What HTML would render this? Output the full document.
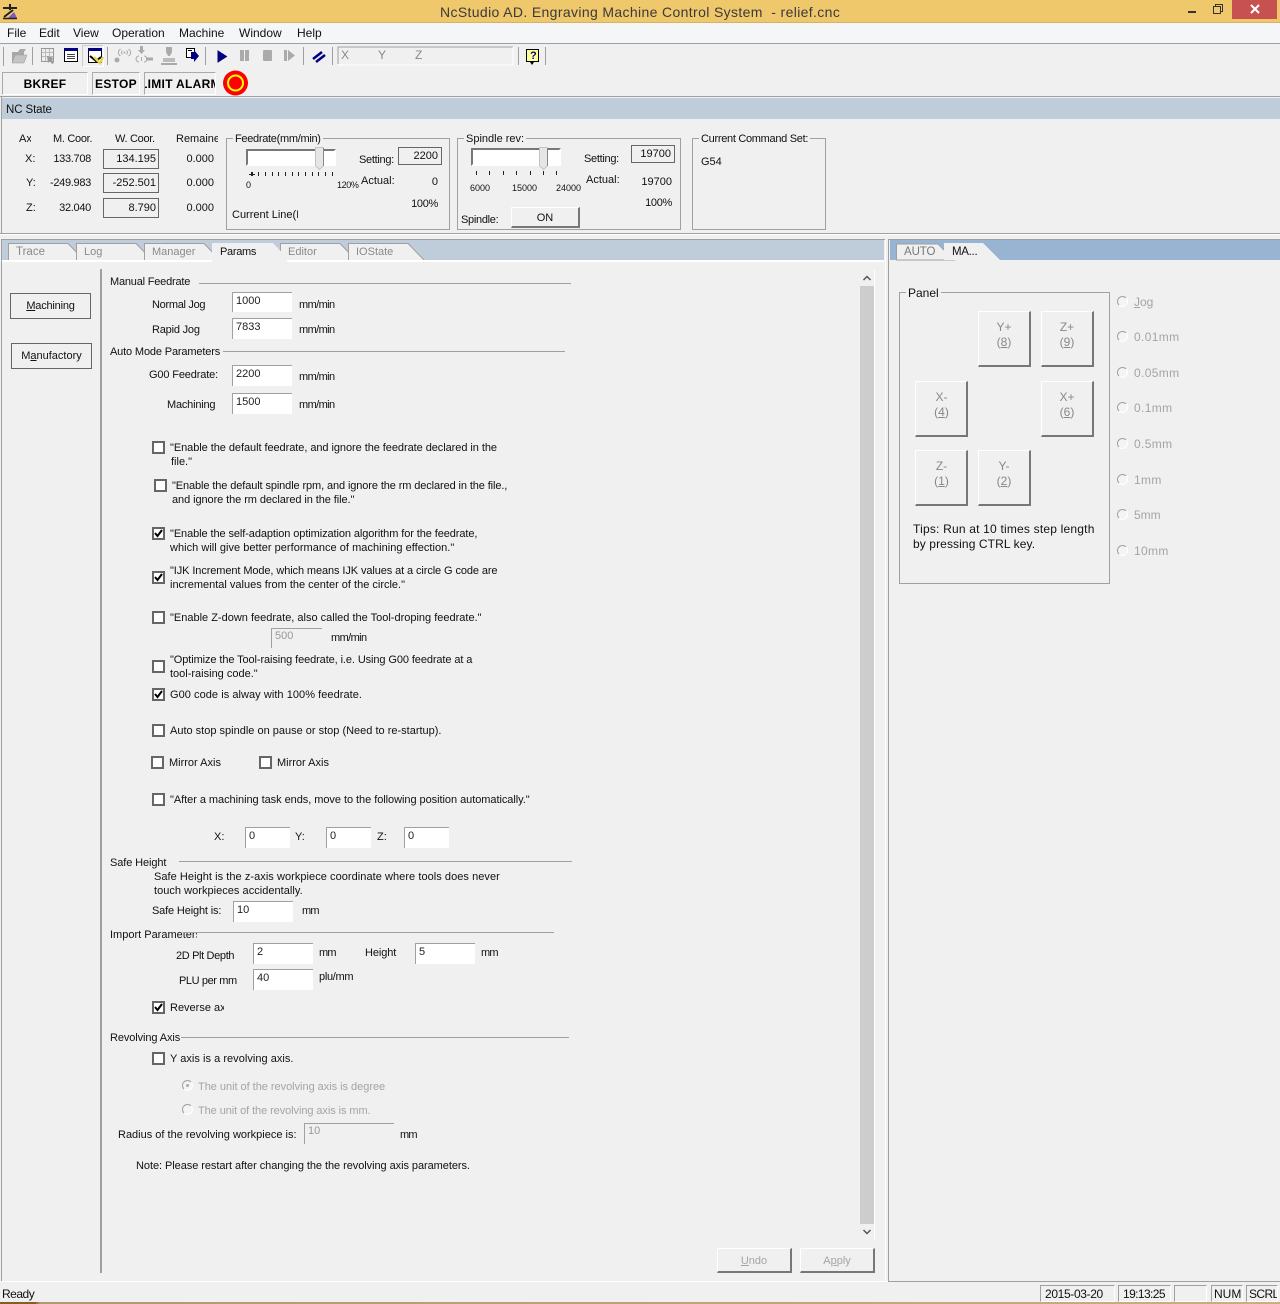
<!DOCTYPE html>
<html><head><meta charset="utf-8"><title>NcStudio</title>
<style>
html,body{margin:0;padding:0;width:1280px;height:1304px;overflow:hidden;background:#f0f0f0}
body{position:relative;font-family:"Liberation Sans",sans-serif;font-size:11px;color:#111}
div,svg{position:absolute;box-sizing:border-box}
.t{white-space:nowrap;line-height:14px;height:14px;transform:translateY(1px)}
.t[style*="font-size"]{transform:none}
.n{letter-spacing:-.3px}
.s{letter-spacing:-.1px}
.m{letter-spacing:-.6px}
.g{color:#a4a4a4}
.r{text-align:right}
.c{text-align:center}
.i{background:#fff;border-top:1px solid #a0a0a0;border-left:1px solid #a0a0a0;padding:1px 0 0 3px;line-height:14px;white-space:nowrap;color:#222}
.b{border:1px solid #666;background:#f0f0f0;text-align:right;padding-right:2px;white-space:nowrap}
.cb{width:13px;height:13px;border:2px solid #666;background:#fff}
.cb svg{left:0;top:0}
.hl{height:1px;background:#a0a0a0}
.gb{border:1px solid #a0a0a0}
.btn{background:#f0f0f0;border-top:1px solid #fff;border-left:1px solid #fff;border-right:2px solid #777;border-bottom:2px solid #777;text-align:center}
.rd{width:11px;height:11px;border-radius:50%;border:1.5px solid #a0a0a0;border-right-color:#fff;border-bottom-color:#fff;background:#f4f4f4}
.l{letter-spacing:.35px}
u{text-decoration:underline}
.bb{border:1px solid;border-color:#aaa #fff #fff #aaa;font:bold 12px/23px "Liberation Sans",sans-serif;color:#000;letter-spacing:.3px;white-space:nowrap;overflow:hidden}
.st{border:1px solid;border-color:#a0a0a0 #fff #fff #a0a0a0;font-size:12px;line-height:16px;white-space:nowrap;overflow:hidden}
</style></head><body>
<!-- title bar -->
<div style="left:0;top:0;width:1280px;height:22px;background:#f0c86c"></div>
<div style="left:0;top:22px;width:1280px;height:1px;background:#d6b266"></div>
<div class="t" style="left:440px;top:3px;font-size:14px;line-height:18px;height:18px;color:#3a3a3a;letter-spacing:.36px">NcStudio AD. Engraving Machine Control System&nbsp; - relief.cnc</div>
<svg style="left:2px;top:3px" width="16" height="17" viewBox="0 0 16 17"><path d="M8 1v6M1 5h14" stroke="#222" stroke-width="2" fill="none"/><path d="M7 14l5-5 3 6H6z" fill="#7a5cc0"/><path d="M11 7L2 14" stroke="#222" stroke-width="2"/><path d="M1 15.500h14" stroke="#222" stroke-width="1.500"/></svg>
<div style="left:1188px;top:11px;width:8px;height:2px;background:#333"></div>
<svg style="left:1212px;top:3px" width="12" height="12" viewBox="0 0 12 12"><rect x="1.500" y="3.500" width="7" height="7" fill="none" stroke="#333"/><path d="M3.500 3V1.500h7v7H9" fill="none" stroke="#333"/></svg>
<div style="left:1232px;top:0;width:45px;height:19px;background:#c75050"></div>
<svg style="left:1250px;top:4px" width="10" height="10" viewBox="0 0 10 10"><path d="M1 1l8 8M9 1L1 9" stroke="#fff" stroke-width="2"/></svg>
<!-- menu -->
<div style="left:0;top:23px;width:1280px;height:20px;background:#f5f6f8"></div>
<div style="left:0;top:43px;width:1280px;height:1px;background:#a0a0a0"></div>
<div class="t" style="left:7px;top:26px;font-size:12px">File</div>
<div class="t" style="left:39px;top:26px;font-size:12px">Edit</div>
<div class="t" style="left:73px;top:26px;font-size:12px">View</div>
<div class="t" style="left:112px;top:26px;font-size:12px">Operation</div>
<div class="t" style="left:179px;top:26px;font-size:12px">Machine</div>
<div class="t" style="left:239px;top:26px;font-size:12px">Window</div>
<div class="t" style="left:297px;top:26px;font-size:12px">Help</div>
<!-- toolbar -->
<svg style="left:0;top:44px" width="560" height="26" viewBox="0 0 560 26">
<g fill="#a0a0a0"><rect x="3" y="3" width="1" height="19"/><rect x="32" y="3" width="1" height="18"/><rect x="107" y="3" width="1" height="18"/><rect x="205" y="3" width="1" height="18"/><rect x="303" y="3" width="1" height="18"/><rect x="332" y="3" width="1" height="18"/><rect x="518" y="3" width="1" height="18"/><rect x="545" y="3" width="1" height="18"/></g>
<g transform="translate(0,-1)">
<path d="M12 9h6l2-3h6l-2 3v11H12z" fill="#a8a8a8"/><path d="M12 20l3-8h12l-3 8z" fill="#c4c4c4" stroke="#999" stroke-width=".5"/>
<rect x="41.500" y="5.500" width="12" height="13" fill="#eee" stroke="#999"/><path d="M42 9.500h11M42 13.500h11M45.500 6v12M49.500 6v12" stroke="#bbb"/><path d="M47 13l7 2-2 2 2 3-2 1-2-3-2 2z" fill="#999"/>
<rect x="64.500" y="5.500" width="13" height="13" fill="#fff" stroke="#000"/><rect x="64" y="5" width="14" height="3" fill="#000080"/><path d="M67 11.500h8M67 13.500h8M67 15.500h8" stroke="#444"/>
<path d="M82.500 23.500V2.500h21" fill="none" stroke="#ccc"/><path d="M103.500 2.500v21h-21" fill="none" stroke="#fff"/><rect x="88.500" y="5.500" width="13" height="14" fill="#fff" stroke="#000"/><rect x="88" y="5" width="14" height="3" fill="#000080"/><path d="M90 13l6 5 5-4" stroke="#000" stroke-width="2" fill="none"/><path d="M94 14l6 6 3-6" stroke="#e8d44c" stroke-width="2.500" fill="none"/>
<g fill="none" stroke="#aaa"><path d="M120.500 6a4 4 0 0 0 0 7M122.500 7.500a2.500 2.500 0 0 0 0 4M128.500 6a4 4 0 0 1 0 7M126.500 7.500a2.500 2.500 0 0 1 0 4"/></g><circle cx="124.500" cy="9.500" r="1" fill="#aaa"/><circle cx="117" cy="17" r="2.500" fill="#aaa"/>
<path d="M140 3h3v4h2l-3.500 4-3.500-4h2z" fill="#aaa"/><g fill="none" stroke="#aaa"><path d="M139 13a3 3 0 0 0 0 6M144 13a3 3 0 0 1 0 6M141.500 14v4"/></g><path d="M146 16h7" stroke="#aaa" stroke-width="3"/>
<path d="M166 4h6v5l-2 4h-2l-2-4z" fill="#aaa"/><rect x="163" y="15" width="12" height="4" fill="#bbb"/><path d="M161 21h16" stroke="#aaa" stroke-width="2"/>
<rect x="186.500" y="5.500" width="8" height="9" fill="#fff" stroke="#000"/><path d="M188 7.500h4" stroke="#000"/><path d="M191 9h3V7l5 6-5 6v-3h-3z" fill="#000080"/>
<path d="M218 8l8.500 5.500-8.500 5.500z" fill="#000080" stroke="#000080"/>
<rect x="240" y="7" width="4" height="11" fill="#aaa"/><rect x="245" y="7" width="4" height="11" fill="#aaa"/>
<rect x="263" y="7" width="9" height="11" rx="1" fill="#aaa"/>
<path d="M284 7h3v11h-3zM288 7l7 5.500-7 5.500z" fill="#aaa"/>
<path d="M313 16l9-7M316 19l9-7" stroke="#000080" stroke-width="2.500"/>
</g>
<path d="M338 20V3h175" stroke="#a0a0a0" fill="none"/><path d="M338 21h175V3" stroke="#fff" fill="none"/>
<rect x="526.500" y="5.500" width="12" height="12" fill="#ff9" stroke="#000"/><path d="M530 18h4l-2 3z" fill="#000"/>
</svg>
<div class="t" style="left:341px;top:48px;font-size:12px;color:#888">X</div>
<div class="t" style="left:378px;top:48px;font-size:12px;color:#888">Y</div>
<div class="t" style="left:415px;top:48px;font-size:12px;color:#888">Z</div>
<div class="t" style="left:530px;top:49px;font-weight:bold;color:#000080;font-size:11px">?</div>
<!-- button row -->
<div class="bb c" style="left:2px;top:72px;width:86px;height:23px">BKREF</div>
<div class="bb c" style="left:92px;top:72px;width:48px;height:23px">ESTOP</div>
<div class="bb" style="left:144px;top:72px;width:72px;height:23px;text-indent:-5px">LIMIT ALARM</div>
<svg style="left:223px;top:70px" width="26" height="26"><circle cx="12.500" cy="13" r="12.500" fill="#f00"/><circle cx="12.500" cy="13" r="7.500" fill="none" stroke="#ff0" stroke-width="2"/></svg>
<!-- NC state -->
<div style="left:0;top:96px;width:1280px;height:1px;background:#a0a0a0"></div>
<div style="left:1px;top:97px;width:1px;height:137px;background:#a0a0a0"></div>
<div style="left:2px;top:98px;width:1278px;height:21px;background:#bfccd9"></div>
<div class="t" style="left:6px;top:103px;font-size:11.500px;letter-spacing:-.1px">NC State</div>
<div style="left:0;top:233px;width:1280px;height:1px;background:#a0a0a0"></div>
<div style="left:0;top:234px;width:1280px;height:1px;background:#fff"></div>
<div class="t" style="left:19px;top:131px;width:12px;overflow:hidden">Axis</div>
<div class="t n" style="left:53px;top:131px">M. Coor.</div>
<div class="t n" style="left:115px;top:131px">W. Coor.</div>
<div class="t" style="left:176px;top:131px;width:42px;overflow:hidden">Remained</div>
<div class="t" style="left:25px;top:151px">X:</div>
<div class="t" style="left:26px;top:175px">Y:</div>
<div class="t" style="left:26px;top:200px">Z:</div>
<div class="t r n" style="left:40px;top:151px;width:51px">133.708</div>
<div class="t r n" style="left:40px;top:175px;width:51px">-249.983</div>
<div class="t r n" style="left:40px;top:200px;width:51px">32.040</div>
<div class="b" style="left:103px;top:149px;width:56px;height:20px;line-height:18px">134.195</div>
<div class="b" style="left:103px;top:173px;width:56px;height:20px;line-height:18px">-252.501</div>
<div class="b" style="left:103px;top:198px;width:56px;height:20px;line-height:18px">8.790</div>
<div class="t r" style="left:180px;top:151px;width:34px">0.000</div>
<div class="t r" style="left:180px;top:175px;width:34px">0.000</div>
<div class="t r" style="left:180px;top:200px;width:34px">0.000</div>
<!-- feedrate -->
<div class="gb" style="left:226px;top:138px;width:224px;height:92px"></div>
<div class="t n" style="left:233px;top:131px;background:#f0f0f0;padding:0 2px">Feedrate(mm/min)</div>
<div style="left:246px;top:149px;width:90px;height:17px;background:#fff;border:2px solid;border-color:#777 #fff #fff #777"></div>
<svg style="left:244px;top:147px" width="96" height="30"><path d="M71.500 0.500h8v18l-4 4-4-4z" fill="#e6e6e6" stroke="#c4c4c4"/><path d="M79.500 1v18" stroke="#888"/><g fill="#222"><rect x="5" y="27" width="6" height="1"/><rect x="7" y="25" width="2" height="4"/><rect x="14" y="25" width="1" height="4"/><rect x="21" y="25" width="1" height="4"/><rect x="28" y="25" width="1" height="4"/><rect x="34" y="25" width="1" height="4"/><rect x="41" y="25" width="1" height="4"/><rect x="48" y="25" width="1" height="4"/><rect x="54" y="25" width="1" height="4"/><rect x="61" y="25" width="1" height="4"/><rect x="68" y="25" width="1" height="4"/><rect x="74" y="25" width="1" height="4"/><rect x="81" y="25" width="1" height="4"/><rect x="88" y="25" width="1" height="4"/></g></svg>
<div class="t" style="left:246px;top:178px;font-size:9px">0</div>
<div class="t" style="left:337px;top:178px;font-size:9px;letter-spacing:-.4px">120%</div>
<div class="t n" style="left:359px;top:152px">Setting:</div>
<div class="t" style="left:361px;top:173px">Actual:</div>
<div class="b" style="left:398px;top:147px;width:44px;height:18px;line-height:16px;padding-right:3px">2200</div>
<div class="t r" style="left:400px;top:174px;width:38px">0</div>
<div class="t r n" style="left:400px;top:196px;width:38px">100%</div>
<div class="t" style="left:232px;top:207px;width:66px;overflow:hidden">Current Line(Block)</div>
<!-- spindle -->
<div class="gb" style="left:457px;top:138px;width:224px;height:92px"></div>
<div class="t" style="left:464px;top:131px;background:#f0f0f0;padding:0 2px">Spindle rev:</div>
<div style="left:471px;top:148px;width:90px;height:18px;background:#fff;border:2px solid;border-color:#777 #fff #fff #777"></div>
<svg style="left:470px;top:146px" width="96" height="32"><path d="M69.500 1.500h8v18l-4 4-4-4z" fill="#e6e6e6" stroke="#c4c4c4"/><path d="M77.500 2v18" stroke="#888"/><g fill="#222"><rect x="6" y="25" width="1" height="4"/><rect x="19" y="25" width="1" height="4"/><rect x="33" y="25" width="1" height="4"/><rect x="46" y="25" width="1" height="4"/><rect x="60" y="25" width="1" height="4"/><rect x="73" y="25" width="1" height="4"/><rect x="86" y="25" width="1" height="4"/></g></svg>
<div class="t" style="left:470px;top:181px;font-size:9px">6000</div>
<div class="t" style="left:512px;top:181px;font-size:9px">15000</div>
<div class="t" style="left:556px;top:181px;font-size:9px">24000</div>
<div class="t n" style="left:584px;top:151px">Setting:</div>
<div class="t" style="left:586px;top:172px">Actual:</div>
<div class="b" style="left:631px;top:145px;width:44px;height:18px;line-height:16px;padding-right:3px">19700</div>
<div class="t r" style="left:630px;top:174px;width:42px">19700</div>
<div class="t r n" style="left:630px;top:195px;width:42px">100%</div>
<div class="t n" style="left:461px;top:212px">Spindle:</div>
<div class="btn" style="left:511px;top:207px;width:69px;height:21px;line-height:20px">ON</div>
<!-- command -->
<div class="gb" style="left:692px;top:138px;width:134px;height:92px"></div>
<div class="t n" style="left:699px;top:131px;background:#f0f0f0;padding:0 2px">Current Command Set:</div>
<div class="t" style="left:701px;top:154px">G54</div>
<!-- tabs left -->
<div style="left:1px;top:239px;width:884px;height:1px;background:#a0a0a0"></div>
<div style="left:2px;top:240px;width:882px;height:21px;background:#bfccd9"></div>
<svg style="left:0;top:240px" width="884" height="24" viewBox="0 0 884 24">
<g fill="#f0f0f0" stroke="#a0a0a0"><path d="M8.500 20.500V3.500H68L85 21H8.500z"/><path d="M76.500 20.500V3.500H136L153 21H76.500z"/><path d="M144.500 20.500V3.500H204L221 21H144.500z"/><path d="M280.500 20.500V3.500H340L357 21H280.500z"/><path d="M348.500 20.500V3.500H408L425 21H348.500z"/></g>
<path d="M212 21V3h61l17 18z" fill="#f0f0f0"/><rect x="0" y="20" width="884" height="2" fill="#fff"/><rect x="212" y="19" width="75" height="4" fill="#f0f0f0"/>
</svg>
<div class="t g" style="left:16px;top:245px;font-size:11.500px;color:#8a8a8a">Trace</div>
<div class="t g" style="left:84px;top:245px;font-size:11px;color:#8a8a8a">Log</div>
<div class="t g" style="left:152px;top:245px;font-size:11px;color:#8a8a8a">Manager</div>
<div class="t" style="left:220px;top:245px;font-size:11px;letter-spacing:-.3px">Params</div>
<div class="t g" style="left:288px;top:245px;font-size:11px;color:#8a8a8a">Editor</div>
<div class="t g" style="left:356px;top:245px;font-size:11px;color:#8a8a8a">IOState</div>
<!-- main panel frame -->
<div style="left:1px;top:240px;width:1px;height:1041px;background:#a0a0a0"></div>
<div style="left:1px;top:1281px;width:1279px;height:1px;background:#fff"></div>
<div style="left:885px;top:240px;width:1px;height:1042px;background:#fff"></div>
<div style="left:100px;top:269px;width:2px;height:1004px;background:#a0a0a0"></div>
<!-- side buttons -->
<div style="left:10px;top:293px;width:81px;height:26px;border:1px solid #666;text-align:center;line-height:24px;letter-spacing:-.2px"><u>M</u>achining</div>
<div style="left:11px;top:343px;width:81px;height:26px;border:1px solid #666;text-align:center;line-height:24px">M<u>a</u>nufactory</div>
<!-- Manual -->
<div class="t s" style="left:110px;top:274px;letter-spacing:-.2px">Manual Feedrate</div>
<div class="hl" style="left:199px;top:283px;width:372px"></div>
<div class="t n" style="left:152px;top:297px">Normal Jog</div>
<div class="i" style="left:232px;top:292px;width:60px;height:20px">1000</div>
<div class="t m" style="left:299px;top:297px">mm/min</div>
<div class="t s" style="left:152px;top:322px;letter-spacing:-.2px">Rapid Jog</div>
<div class="i" style="left:232px;top:318px;width:60px;height:21px">7833</div>
<div class="t m" style="left:299px;top:322px">mm/min</div>
<div class="t" style="left:110px;top:344px;letter-spacing:-.15px">Auto Mode Parameters</div>
<div class="hl" style="left:223px;top:351px;width:342px"></div>
<div class="t" style="left:149px;top:367px;letter-spacing:-.15px">G00 Feedrate:</div>
<div class="i" style="left:232px;top:365px;width:60px;height:21px">2200</div>
<div class="t m" style="left:299px;top:369px">mm/min</div>
<div class="t" style="left:167px;top:397px;letter-spacing:-.2px">Machining</div>
<div class="i" style="left:232px;top:393px;width:60px;height:21px">1500</div>
<div class="t m" style="left:299px;top:397px">mm/min</div>
<!-- checks -->
<div class="cb" style="left:152px;top:441px"></div>
<div class="t" style="left:170px;top:440px;letter-spacing:-.06px">"Enable the default feedrate, and ignore the feedrate declared in the</div>
<div class="t" style="left:171px;top:454px">file."</div>
<div class="cb" style="left:154px;top:479px"></div>
<div class="t" style="left:172px;top:478px;letter-spacing:-.11px">"Enable the default spindle rpm, and ignore the rm declared in the file.,</div>
<div class="t" style="left:172px;top:492px;letter-spacing:-.08px">and ignore the rm declared in the file."</div>
<div class="cb" style="left:152px;top:527px"><svg width="9" height="9" viewBox="0 0 9 9"><path d="M1 4l2.500 3L8 1" stroke="#000" stroke-width="2" fill="none"/></svg></div>
<div class="t" style="left:170px;top:526px;letter-spacing:-.09px">"Enable the self-adaption optimization algorithm for the feedrate,</div>
<div class="t" style="left:170px;top:540px;letter-spacing:.03px">which will give better performance of machining effection."</div>
<div class="cb" style="left:152px;top:571px"><svg width="9" height="9" viewBox="0 0 9 9"><path d="M1 4l2.500 3L8 1" stroke="#000" stroke-width="2" fill="none"/></svg></div>
<div class="t" style="left:170px;top:563px;letter-spacing:-.1px">"IJK Increment Mode, which means IJK values at a circle G code are</div>
<div class="t" style="left:170px;top:577px">incremental values from the center of the circle."</div>
<div class="cb" style="left:152px;top:611px"></div>
<div class="t" style="left:170px;top:610px">"Enable Z-down feedrate, also called the Tool-droping feedrate."</div>
<div class="i" style="left:271px;top:628px;width:51px;height:20px;background:#f0f0f0;color:#999;padding-top:0">500</div>
<div class="t m" style="left:331px;top:630px">mm/min</div>
<div class="cb" style="left:152px;top:660px"></div>
<div class="t" style="left:170px;top:652px;letter-spacing:-.1px">"Optimize the Tool-raising feedrate, i.e. Using G00 feedrate at a</div>
<div class="t" style="left:170px;top:666px">tool-raising code."</div>
<div class="cb" style="left:152px;top:688px"><svg width="9" height="9" viewBox="0 0 9 9"><path d="M1 4l2.500 3L8 1" stroke="#000" stroke-width="2" fill="none"/></svg></div>
<div class="t" style="left:170px;top:687px;letter-spacing:.05px">G00 code is alway with 100% feedrate.</div>
<div class="cb" style="left:152px;top:724px"></div>
<div class="t" style="left:170px;top:723px">Auto stop spindle on pause or stop (Need to re-startup).</div>
<div class="cb" style="left:151px;top:756px"></div>
<div class="t" style="left:169px;top:755px">Mirror Axis</div>
<div class="cb" style="left:259px;top:756px"></div>
<div class="t" style="left:277px;top:755px">Mirror Axis</div>
<div class="cb" style="left:152px;top:793px"></div>
<div class="t" style="left:170px;top:792px;letter-spacing:-.05px">"After a machining task ends, move to the following position automatically."</div>
<div class="t" style="left:214px;top:829px">X:</div>
<div class="i" style="left:245px;top:827px;width:45px;height:21px">0</div>
<div class="t" style="left:295px;top:829px">Y:</div>
<div class="i" style="left:326px;top:827px;width:45px;height:21px">0</div>
<div class="t" style="left:377px;top:829px">Z:</div>
<div class="i" style="left:404px;top:827px;width:45px;height:21px">0</div>
<!-- safe height -->
<div class="t s" style="left:110px;top:855px">Safe Height</div>
<div class="hl" style="left:179px;top:861px;width:393px"></div>
<div class="t" style="left:154px;top:869px;letter-spacing:.05px">Safe Height is the z-axis workpiece coordinate where tools does never</div>
<div class="t" style="left:154px;top:883px;letter-spacing:.03px">touch workpieces accidentally.</div>
<div class="t" style="left:152px;top:903px;letter-spacing:-.15px">Safe Height is:</div>
<div class="i" style="left:233px;top:901px;width:60px;height:21px">10</div>
<div class="t" style="left:302px;top:903px;letter-spacing:-.8px">mm</div>
<!-- import -->
<div class="t" style="left:110px;top:927px;width:87px;overflow:hidden">Import Parameters</div>
<div style="left:183px;top:926px;width:20px;height:6px;background:#f0f0f0"></div>
<div class="hl" style="left:183px;top:932px;width:371px"></div>
<div class="t" style="left:176px;top:948px;letter-spacing:-.35px">2D Plt Depth</div>
<div class="i" style="left:253px;top:943px;width:60px;height:21px">2</div>
<div class="t" style="left:319px;top:945px;letter-spacing:-.8px">mm</div>
<div class="t s" style="left:365px;top:945px">Height</div>
<div class="i" style="left:415px;top:943px;width:60px;height:21px">5</div>
<div class="t" style="left:481px;top:945px;letter-spacing:-.8px">mm</div>
<div class="t" style="left:179px;top:973px;letter-spacing:-.4px">PLU per mm</div>
<div class="i" style="left:253px;top:969px;width:60px;height:21px">40</div>
<div class="t n" style="left:319px;top:969px">plu/mm</div>
<div class="cb" style="left:152px;top:1001px"><svg width="9" height="9" viewBox="0 0 9 9"><path d="M1 4l2.500 3L8 1" stroke="#000" stroke-width="2" fill="none"/></svg></div>
<div class="t" style="left:170px;top:1000px;width:54px;overflow:hidden">Reverse axis</div>
<!-- revolving -->
<div class="t s" style="left:110px;top:1030px">Revolving Axis</div>
<div class="hl" style="left:181px;top:1037px;width:388px"></div>
<div class="cb" style="left:152px;top:1052px"></div>
<div class="t" style="left:170px;top:1051px;letter-spacing:.03px">Y axis is a revolving axis.</div>
<div class="rd" style="left:182px;top:1080px"><div style="left:2.500px;top:2.500px;width:3px;height:3px;border-radius:50%;background:#aaa"></div></div>
<div class="t g" style="left:198px;top:1079px;letter-spacing:-.03px">The unit of the revolving axis is degree</div>
<div class="rd" style="left:182px;top:1104px"></div>
<div class="t g" style="left:198px;top:1103px;letter-spacing:-.08px">The unit of the revolving axis is mm.</div>
<div class="t" style="left:118px;top:1127px">Radius of the revolving workpiece is:</div>
<div class="i" style="left:304px;top:1123px;width:90px;height:21px;background:#f0f0f0;color:#999;padding-top:0">10</div>
<div class="t" style="left:400px;top:1127px;letter-spacing:-.8px">mm</div>
<div class="t" style="left:136px;top:1158px;letter-spacing:-.06px">Note: Please restart after changing the the revolving axis parameters.</div>
<!-- scrollbar -->
<div style="left:860px;top:286px;width:14px;height:938px;background:#cdcdcd"></div>
<svg style="left:860px;top:272px" width="14" height="12"><path d="M3.500 8L7 4.500 10.500 8" fill="none" stroke="#555" stroke-width="1.500"/></svg>
<svg style="left:860px;top:1226px" width="14" height="12"><path d="M3.500 4L7 7.500 10.500 4" fill="none" stroke="#555" stroke-width="1.500"/></svg>
<div style="left:874px;top:270px;width:1px;height:970px;background:#fff"></div>
<div class="btn g" style="left:717px;top:1248px;width:75px;height:25px;line-height:24px"><u>U</u>ndo</div>
<div class="btn g" style="left:800px;top:1248px;width:75px;height:25px;line-height:24px">A<u>p</u>ply</div>
<!-- right panel -->
<div style="left:888px;top:239px;width:1px;height:1043px;background:#a0a0a0"></div>
<div style="left:888px;top:239px;width:392px;height:1px;background:#a0a0a0"></div>
<div style="left:889px;top:1281px;width:391px;height:1px;background:#a0a0a0"></div>
<div style="left:890px;top:240px;width:390px;height:20px;background:#98b4d2"></div>
<svg style="left:890px;top:240px" width="120" height="21"><path d="M6.500 19.500V4H48l16 16H6.500z" fill="#f0f0f0" stroke="#a0a0a0"/><path d="M54 20V3h39l17 17z" fill="#f0f0f0"/></svg>
<div class="t" style="left:904px;top:245px;font-size:11.500px;letter-spacing:-.1px;color:#777">AUTO</div>
<div class="t" style="left:952px;top:245px;font-size:11.500px;letter-spacing:-.3px">MA...</div>
<div class="gb" style="left:899px;top:292px;width:211px;height:292px"></div>
<div class="t" style="left:906px;top:286px;font-size:12px;background:#f0f0f0;padding:0 2px">Panel</div>
<div class="btn g" style="left:978px;top:311px;width:53px;height:56px;padding-top:8px;line-height:15px;font-size:12px;color:#888">Y+<br>(<u>8</u>)</div>
<div class="btn g" style="left:1041px;top:311px;width:53px;height:56px;padding-top:8px;line-height:15px;font-size:12px;color:#888">Z+<br>(<u>9</u>)</div>
<div class="btn g" style="left:915px;top:381px;width:53px;height:56px;padding:8px 0 0 1px;line-height:15px;font-size:12px;color:#888">X-<br>(<u>4</u>)</div>
<div class="btn g" style="left:1041px;top:381px;width:53px;height:56px;padding-top:8px;line-height:15px;font-size:12px;color:#888">X+<br>(<u>6</u>)</div>
<div class="btn g" style="left:915px;top:450px;width:53px;height:56px;padding:8px 0 0 1px;line-height:15px;font-size:12px;color:#888">Z-<br>(<u>1</u>)</div>
<div class="btn g" style="left:978px;top:450px;width:53px;height:56px;padding-top:8px;line-height:15px;font-size:12px;color:#888">Y-<br>(<u>2</u>)</div>
<div class="t" style="left:913px;top:522px;font-size:12px;letter-spacing:.2px">Tips: Run at 10 times step length</div>
<div class="t" style="left:913px;top:537px;font-size:12px;letter-spacing:.1px">by pressing CTRL key.</div>
<div class="rd" style="left:1117px;top:296px"></div><div class="t g" style="left:1134px;top:295px;font-size:12px"><u>J</u>og</div>
<div class="rd" style="left:1117px;top:331px"></div><div class="t g l" style="left:1134px;top:330px;font-size:12px">0.01mm</div>
<div class="rd" style="left:1117px;top:367px"></div><div class="t g l" style="left:1134px;top:366px;font-size:12px">0.05mm</div>
<div class="rd" style="left:1117px;top:402px"></div><div class="t g l" style="left:1134px;top:401px;font-size:12px">0.1mm</div>
<div class="rd" style="left:1117px;top:438px"></div><div class="t g l" style="left:1134px;top:437px;font-size:12px">0.5mm</div>
<div class="rd" style="left:1117px;top:474px"></div><div class="t g l" style="left:1134px;top:473px;font-size:12px">1mm</div>
<div class="rd" style="left:1117px;top:509px"></div><div class="t g" style="left:1134px;top:508px;font-size:12px">5mm</div>
<div class="rd" style="left:1117px;top:545px"></div><div class="t g l" style="left:1134px;top:544px;font-size:12px">10mm</div>
<!-- status -->
<div class="t" style="left:2px;top:1287px;font-size:12px;letter-spacing:-.5px">Ready</div>
<div class="st" style="left:1040px;top:1285px;width:75px;height:17px;padding-left:4px;letter-spacing:-.35px">2015-03-20</div>
<div class="st" style="left:1118px;top:1285px;width:53px;height:17px;padding-left:4px;letter-spacing:-.6px">19:13:25</div>
<div class="st" style="left:1174px;top:1285px;width:33px;height:17px"></div>
<div class="st" style="left:1211px;top:1285px;width:32px;height:17px;padding-left:2px">NUM</div>
<div class="st" style="left:1246px;top:1285px;width:32px;height:17px;padding-left:2px;letter-spacing:-.6px">SCRL</div>
<div style="left:0;top:1302px;width:1280px;height:2px;background:linear-gradient(90deg,#8a5a20 0,#8a5a20 35px,#b09a6c 40px,#c8b078 1280px)"></div>
</body></html>
